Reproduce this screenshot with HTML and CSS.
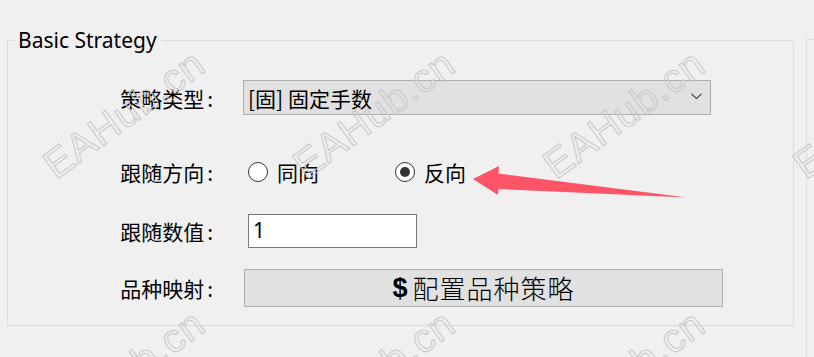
FILE: index.html
```html
<!DOCTYPE html>
<html lang="zh-CN">
<head>
<meta charset="utf-8">
<title>Basic Strategy</title>
<link rel="stylesheet" href="styles.css">
</head>
<body>
<div class="page">
  <fieldset class="group">
    <legend class="group-title">Basic Strategy</legend>
    <div class="form">
      <div class="row row-type">
        <span class="label">策略类型<span class="colon">:</span></span>
        <div class="combo">
          <span class="combo-text">[固] 固定手数</span>
          <svg class="chevron" width="11" height="7" viewBox="0 0 11 7"><path d="M0.5 0.8 L5.5 5.6 L10.5 0.8" fill="none" stroke="#333" stroke-width="1.1"/></svg>
        </div>
      </div>
      <div class="row row-dir">
        <span class="label">跟随方向<span class="colon">:</span></span>
        <div class="radios">
          <label class="radio"><span class="dot"></span><span>同向</span></label>
          <label class="radio checked"><span class="dot"></span><span>反向</span></label>
        </div>
      </div>
      <div class="row row-val">
        <span class="label">跟随数值<span class="colon">:</span></span>
        <div class="textbox">1</div>
      </div>
      <div class="row row-map">
        <span class="label">品种映射<span class="colon">:</span></span>
        <div class="button"><span class="dollar">$</span><span class="btn-text">配置品种策略</span></div>
      </div>
    </div>
  </fieldset>
  <div class="group2"></div>
</div>

<svg class="arrow" width="814" height="357" viewBox="0 0 814 357">
  <path d="M473 179 L499 166 L498.5 173.5 L687 197.5 L498.5 189 L498 195 Z" fill="#fe5468"/>
</svg>

<div class="watermarks">
  <span class="wm" style="left:60px;top:144px">EAHub.cn</span>
  <span class="wm" style="left:310px;top:144px">EAHub.cn</span>
  <span class="wm" style="left:560px;top:144px">EAHub.cn</span>
  <span class="wm" style="left:810px;top:144px">EAHub.cn</span>
  <span class="wm" style="left:60px;top:404px">EAHub.cn</span>
  <span class="wm" style="left:310px;top:404px">EAHub.cn</span>
  <span class="wm" style="left:560px;top:404px">EAHub.cn</span>
</div>
</body>
</html>
```

FILE: styles.css
```css
html, body {
  margin: 0;
  padding: 0;
}
body {
  width: 814px;
  height: 357px;
  overflow: hidden;
  background: #f0f0f0;
  color: #000;
  font-family: "Noto Sans", "Noto Sans CJK SC", sans-serif;
  position: relative;
}
.page {
  display: flex;
  align-items: flex-start;
  padding: 27px 0 0 7px;
  gap: 12px;
  width: 814px;
  box-sizing: border-box;
  overflow: hidden;
}
.group {
  margin: 0;
  flex: none;
  width: 787px;
  box-sizing: border-box;
  border: 1px solid #dcdcdc;
  padding: 0 0 18px 0;
  min-width: 0;
}
.group-title {
  font-family: "Noto Sans", sans-serif;
  font-size: 21px;
  line-height: 26px;
  padding: 0 4px 0 4px;
  margin-left: 6px;
}
.form {
  display: flex;
  flex-direction: column;
  padding-top: 27px;
}
.row {
  display: grid;
  grid-template-columns: 205px 1fr;
  align-items: center;
}
.label {
  font-family: "Noto Sans CJK SC", sans-serif;
  font-size: 21px;
  line-height: 24px;
  text-align: right;
  white-space: nowrap;
}
.colon {
  margin-left: 3px;
}
.row-type { height: 35px; }
.row-dir { height: 24px; margin-top: 45px; }
.row-val { height: 34px; margin-top: 30px; }
.row-map { height: 38px; margin-top: 21px; }

.combo {
  margin-left: 30px;
  width: 468px;
  height: 35px;
  box-sizing: border-box;
  background: #e1e1e1;
  border: 1px solid #adadad;
  display: flex;
  align-items: center;
  justify-content: space-between;
  padding: 0 8px 0 4px;
}
.combo-text {
  font-family: "Noto Sans CJK SC", sans-serif;
  font-size: 21px;
  line-height: 24px;
}
.chevron {
  display: block;
  margin-bottom: 2px;
}
.radios {
  margin-left: 35px;
  display: flex;
}
.radio {
  display: flex;
  align-items: center;
  gap: 9px;
  font-family: "Noto Sans CJK SC", sans-serif;
  font-size: 21px;
  line-height: 24px;
  width: 147px;
}
.dot {
  width: 20px;
  height: 20px;
  box-sizing: border-box;
  border: 1px solid #333;
  border-radius: 50%;
  background: #fff;
  display: flex;
  align-items: center;
  justify-content: center;
}
.radio.checked .dot::after {
  content: "";
  width: 10px;
  height: 10px;
  border-radius: 50%;
  background: #333;
}
.textbox {
  margin-left: 35px;
  width: 169px;
  height: 34px;
  box-sizing: border-box;
  background: #fff;
  border: 1px solid #7a7a7a;
  font-family: "Noto Sans", sans-serif;
  font-size: 21px;
  line-height: 30px;
  padding-left: 4px;
}
.button {
  margin-left: 31px;
  width: 479px;
  height: 38px;
  box-sizing: border-box;
  background: #e1e1e1;
  border: 1px solid #adadad;
  display: flex;
  align-items: center;
  justify-content: center;
  gap: 5px;
}
.dollar {
  font-family: "Liberation Sans", sans-serif;
  font-weight: bold;
  font-size: 27px;
  line-height: 30px;
}
.btn-text {
  font-family: "Noto Sans CJK SC", sans-serif;
  font-size: 26px;
  line-height: 30px;
  letter-spacing: 1px;
  font-weight: 300;
}
.group2 {
  margin-top: 12px;
  width: 40px;
  height: 330px;
  border: 1px solid #dcdcdc;
  flex: none;
}
.arrow {
  position: absolute;
  left: 0;
  top: 0;
  pointer-events: none;
}
.watermarks {
  position: absolute;
  inset: 0;
  pointer-events: none;
  overflow: hidden;
}
.wm {
  position: absolute;
  font-family: "Liberation Sans", sans-serif;
  font-size: 40px;
  line-height: 42px;
  letter-spacing: 1px;
  color: transparent;
  -webkit-text-stroke: 1px #c8c8c8;
  transform-origin: 0 100%;
  transform: rotate(-36deg);
  white-space: nowrap;
}
```
